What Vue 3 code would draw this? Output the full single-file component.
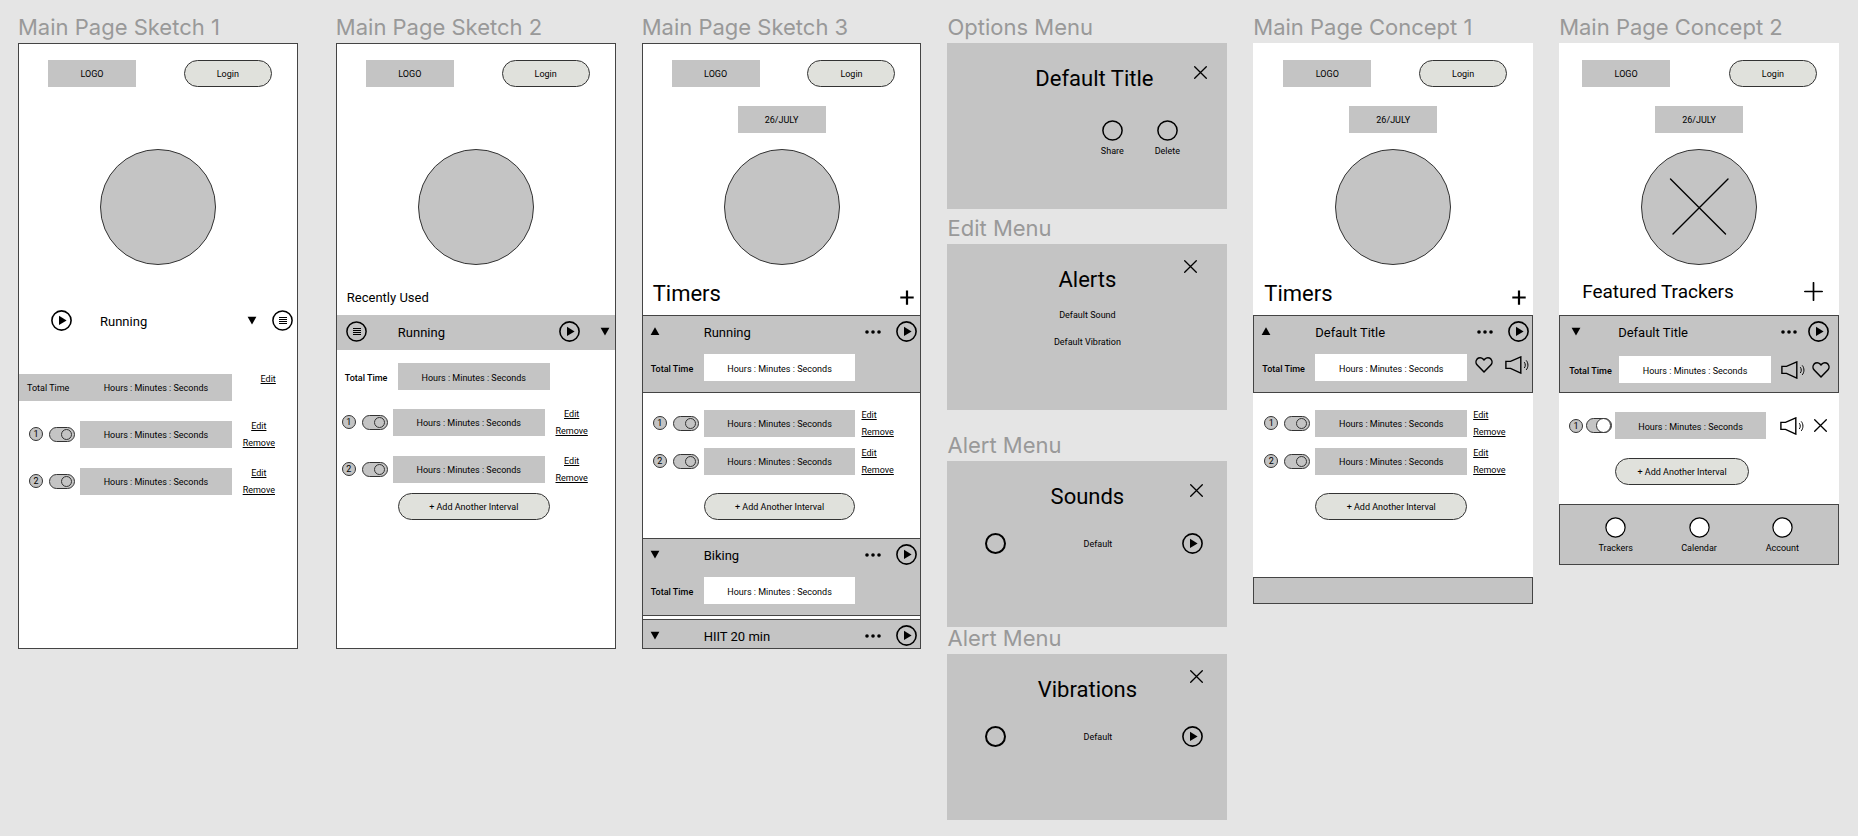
<script setup>
import { h } from 'vue'

const shapes = {
  play: {
    w: 21, h: 21,
    body: [
      ['circle', { cx: 10.5, cy: 10.5, r: 9.6, fill: 'none', stroke: '#000', 'stroke-width': 1.6 }],
      ['path', { d: 'M8 5.8L15.6 10.4L8 15z', fill: '#000' }],
    ],
  },
  menu: {
    w: 21, h: 21,
    body: [
      ['circle', { cx: 10.5, cy: 10.5, r: 9.6, fill: 'none', stroke: '#000', 'stroke-width': 1.5 }],
      ['path', { d: 'M7 7.5h8M7 9.5h8M7 11.5h8M7 13.5h8', stroke: '#000', 'stroke-width': 1 }],
    ],
  },
  ring: {
    w: 21, h: 21,
    body: [['circle', { cx: 10.5, cy: 10.5, r: 9.6, fill: 'none', stroke: '#000', 'stroke-width': 1.5 }]],
  },
  disc: {
    w: 21, h: 21,
    body: [['circle', { cx: 10.5, cy: 10.5, r: 9.6, fill: '#fff', stroke: '#000', 'stroke-width': 1.2 }]],
  },
  down: { w: 10, h: 21, body: [['path', { d: 'M.6 6.8h8.8L5 14.6z', fill: '#000' }]] },
  up: { w: 10, h: 21, body: [['path', { d: 'M.6 14h8.8L5 6.2z', fill: '#000' }]] },
  dots: {
    w: 16, h: 21,
    body: [
      ['circle', { cx: 2, cy: 11, r: 1.8 }],
      ['circle', { cx: 8, cy: 11, r: 1.8 }],
      ['circle', { cx: 14, cy: 11, r: 1.8 }],
    ],
  },
  plus: { w: 14, h: 15, body: [['path', { d: 'M.3 7.5h13.4M7 .5v14.2', stroke: '#000', 'stroke-width': 2.2 }]] },
  plusLarge: {
    w: 19, h: 19,
    body: [['path', { d: 'M.8 9.5h17.4M9.5.8v17.4', stroke: '#000', 'stroke-width': 1.7, 'stroke-linecap': 'round' }]],
  },
  close: {
    w: 13, h: 13,
    body: [['path', { d: 'M.7.7l11.6 11.6M12.3.7L.7 12.3', stroke: '#000', 'stroke-width': 1.3, 'stroke-linecap': 'round' }]],
  },
  cross: {
    w: 115, h: 115,
    body: [['path', { d: 'M28.5 29l55 55M86 29L31 84', stroke: '#000', 'stroke-width': 1.4, 'stroke-linecap': 'round' }]],
  },
  heart: {
    w: 18, h: 18,
    body: [['path', {
      d: 'M9 16L2.2 9C.6 7.3.6 4.6 2.2 2.9 3.9 1.2 6.5 1.2 8.1 2.9L9 3.9l.9-1c1.6-1.7 4.2-1.7 5.9 0 1.6 1.7 1.6 4.4 0 6.1z',
      fill: 'none', stroke: '#000', 'stroke-width': 1.5, 'stroke-linejoin': 'round',
    }]],
  },
  speaker: {
    w: 24, h: 18,
    body: [
      ['path', { d: 'M.9 5.4h4.6L15.8.9v16.2L5.5 12.4H.9z', fill: 'none', stroke: '#000', 'stroke-width': 1.4 }],
      ['path', { d: 'M19.3 6.2c1.3 1.7 1.3 4.2 0 5.8M21.2 4.4c2.3 2.6 2.3 6.9 0 9.5', fill: 'none', stroke: '#000', 'stroke-width': 1 }],
    ],
  },
}

const Icon = (props) => {
  const s = shapes[props.name]
  return h(
    'svg',
    { width: s.w, height: s.h, viewBox: `0 0 ${s.w} ${s.h}`, 'aria-hidden': 'true' },
    s.body.map(([tag, attrs]) => h(tag, attrs)),
  )
}
Icon.props = ['name']

const duration = 'Hours : Minutes : Seconds'
const intervals = [1, 2]
const tabs = ['Trackers', 'Calendar', 'Account']
const alertMenus = [
  { title: 'Sounds', top: 'low' },
  { title: 'Vibrations', top: 'high' },
]
</script>

<template>
  <main class="canvas">
    <section class="column spaced">
      <h2 class="name">Main Page Sketch 1</h2>
      <article class="board framed tall">
        <header class="top">
          <div class="tag">LOGO</div>
          <button class="pill login">Login</button>
        </header>
        <div class="dial"></div>
        <div class="bar plain">
          <button class="icon" aria-label="Play"><Icon name="play" /></button>
          <h3 class="title">Running</h3>
          <button class="icon" aria-label="Expand"><Icon name="down" /></button>
          <button class="icon" aria-label="Menu"><Icon name="menu" /></button>
        </div>
        <div class="rows loose">
          <div class="row total-band">
            <div class="band">
              <span class="label regular">Total Time</span>
              <div class="field">{{ duration }}</div>
            </div>
            <div class="links end"><a href="#">Edit</a></div>
          </div>
          <div v-for="n in intervals" :key="n" class="row wide-links">
            <span class="number">{{ n }}</span>
            <input class="toggle" type="checkbox" checked :aria-label="'Interval ' + n" />
            <div class="field">{{ duration }}</div>
            <div class="links middle"><a href="#">Edit</a><a href="#">Remove</a></div>
          </div>
        </div>
      </article>
    </section>

    <section class="column">
      <h2 class="name">Main Page Sketch 2</h2>
      <article class="board framed tall">
        <header class="top">
          <div class="tag">LOGO</div>
          <button class="pill login">Login</button>
        </header>
        <div class="dial"></div>
        <div class="heading"><h3 class="small-heading">Recently Used</h3></div>
        <div class="bar band-bar">
          <button class="icon" aria-label="Menu"><Icon name="menu" /></button>
          <h3 class="title">Running</h3>
          <button class="icon" aria-label="Play"><Icon name="play" /></button>
          <button class="icon" aria-label="Expand"><Icon name="down" /></button>
        </div>
        <div class="total open">
          <span class="label">Total Time</span>
          <div class="field">{{ duration }}</div>
        </div>
        <div class="rows medium">
          <div v-for="n in intervals" :key="n" class="row shifted">
            <span class="number">{{ n }}</span>
            <input class="toggle" type="checkbox" checked :aria-label="'Interval ' + n" />
            <div class="field">{{ duration }}</div>
            <div class="links middle"><a href="#">Edit</a><a href="#">Remove</a></div>
          </div>
        </div>
        <div class="add close-add"><button class="pill">+ Add Another Interval</button></div>
      </article>
    </section>

    <section class="column">
      <h2 class="name">Main Page Sketch 3</h2>
      <article class="board framed">
        <header class="top">
          <div class="tag">LOGO</div>
          <button class="pill login">Login</button>
        </header>
        <div class="tag date">26/JULY</div>
        <div class="dial dated"></div>
        <div class="heading">
          <h3 class="big">Timers</h3>
          <button class="icon" aria-label="Add timer"><Icon name="plus" /></button>
        </div>
        <div class="block">
          <div class="bar">
            <button class="icon" aria-label="Collapse"><Icon name="up" /></button>
            <h3 class="title">Running</h3>
            <button class="icon" aria-label="Options"><Icon name="dots" /></button>
            <button class="icon" aria-label="Play"><Icon name="play" /></button>
          </div>
          <div class="total">
            <span class="label">Total Time</span>
            <div class="field light">{{ duration }}</div>
          </div>
        </div>
        <div class="rows">
          <div v-for="n in intervals" :key="n" class="row">
            <span class="number">{{ n }}</span>
            <input class="toggle" type="checkbox" checked :aria-label="'Interval ' + n" />
            <div class="field">{{ duration }}</div>
            <div class="links"><a href="#">Edit</a><a href="#">Remove</a></div>
          </div>
        </div>
        <div class="add"><button class="pill">+ Add Another Interval</button></div>
        <div class="block follow">
          <div class="bar">
            <button class="icon" aria-label="Expand"><Icon name="down" /></button>
            <h3 class="title">Biking</h3>
            <button class="icon" aria-label="Options"><Icon name="dots" /></button>
            <button class="icon" aria-label="Play"><Icon name="play" /></button>
          </div>
          <div class="total">
            <span class="label">Total Time</span>
            <div class="field light">{{ duration }}</div>
          </div>
        </div>
        <div class="block cut">
          <div class="bar">
            <button class="icon" aria-label="Expand"><Icon name="down" /></button>
            <h3 class="title">HIIT 20 min</h3>
            <button class="icon" aria-label="Options"><Icon name="dots" /></button>
            <button class="icon" aria-label="Play"><Icon name="play" /></button>
          </div>
        </div>
      </article>
    </section>

    <section class="column">
      <h2 class="name">Options Menu</h2>
      <article class="card">
        <header class="card-top aside">
          <h3 class="big">Default Title</h3>
          <button class="icon dismiss low near" aria-label="Close"><Icon name="close" /></button>
        </header>
        <div class="actions">
          <button class="action"><Icon name="ring" />Share</button>
          <button class="action"><Icon name="ring" />Delete</button>
        </div>
      </article>

      <h2 class="name second">Edit Menu</h2>
      <article class="card">
        <header class="card-top">
          <h3 class="big">Alerts</h3>
          <button class="icon dismiss far" aria-label="Close"><Icon name="close" /></button>
        </header>
        <div class="choices">
          <button class="choice">Default Sound</button>
          <button class="choice">Default Vibration</button>
        </div>
      </article>

      <template v-for="(m, i) in alertMenus" :key="m.title">
        <h2 class="name" :class="{ third: i === 0 }">Alert Menu</h2>
        <article class="card">
          <header class="card-top">
            <h3 class="big">{{ m.title }}</h3>
            <button class="icon dismiss" :class="m.top" aria-label="Close"><Icon name="close" /></button>
          </header>
          <div class="pick">
            <input :id="'pick-' + i" class="radio" type="radio" :name="'pick-' + i" />
            <label :for="'pick-' + i">Default</label>
            <button class="icon" aria-label="Play"><Icon name="play" /></button>
          </div>
        </article>
      </template>
    </section>

    <section class="column">
      <h2 class="name">Main Page Concept 1</h2>
      <article class="board">
        <header class="top">
          <div class="tag">LOGO</div>
          <button class="pill login">Login</button>
        </header>
        <div class="tag date">26/JULY</div>
        <div class="dial dated"></div>
        <div class="heading">
          <h3 class="big">Timers</h3>
          <button class="icon" aria-label="Add timer"><Icon name="plus" /></button>
        </div>
        <div class="block boxed">
          <div class="bar">
            <button class="icon" aria-label="Collapse"><Icon name="up" /></button>
            <h3 class="title">Default Title</h3>
            <button class="icon" aria-label="Options"><Icon name="dots" /></button>
            <button class="icon" aria-label="Play"><Icon name="play" /></button>
          </div>
          <div class="total with-tools">
            <span class="label">Total Time</span>
            <div class="field light">{{ duration }}</div>
            <div class="tools">
              <button class="icon" aria-label="Favourite"><Icon name="heart" /></button>
              <button class="icon" aria-label="Sound"><Icon name="speaker" /></button>
            </div>
          </div>
        </div>
        <div class="rows">
          <div v-for="n in intervals" :key="n" class="row">
            <span class="number">{{ n }}</span>
            <input class="toggle" type="checkbox" checked :aria-label="'Interval ' + n" />
            <div class="field">{{ duration }}</div>
            <div class="links"><a href="#">Edit</a><a href="#">Remove</a></div>
          </div>
        </div>
        <div class="add"><button class="pill">+ Add Another Interval</button></div>
        <footer class="strip"></footer>
      </article>
    </section>

    <section class="column">
      <h2 class="name">Main Page Concept 2</h2>
      <article class="board featured">
        <header class="top">
          <div class="tag">LOGO</div>
          <button class="pill login">Login</button>
        </header>
        <div class="tag date">26/JULY</div>
        <div class="dial dated"><Icon name="cross" /></div>
        <div class="heading">
          <h3 class="mid">Featured Trackers</h3>
          <button class="icon" aria-label="Add tracker"><Icon name="plusLarge" /></button>
        </div>
        <div class="block boxed">
          <div class="bar">
            <button class="icon" aria-label="Expand"><Icon name="down" /></button>
            <h3 class="title">Default Title</h3>
            <button class="icon" aria-label="Options"><Icon name="dots" /></button>
            <button class="icon" aria-label="Play"><Icon name="play" /></button>
          </div>
          <div class="total">
            <span class="label">Total Time</span>
            <div class="field light">{{ duration }}</div>
            <button class="icon sound" aria-label="Sound"><Icon name="speaker" /></button>
            <button class="icon" aria-label="Favourite"><Icon name="heart" /></button>
          </div>
        </div>
        <div class="rows">
          <div class="row">
            <span class="number">1</span>
            <input class="toggle" type="checkbox" checked aria-label="Interval 1" />
            <div class="field">{{ duration }}</div>
            <button class="icon sound" aria-label="Sound"><Icon name="speaker" /></button>
            <button class="icon" aria-label="Remove"><Icon name="close" /></button>
          </div>
        </div>
        <div class="add"><button class="pill">+ Add Another Interval</button></div>
        <nav class="tabs">
          <button v-for="t in tabs" :key="t" class="action"><Icon name="disc" />{{ t }}</button>
        </nav>
      </article>
    </section>
  </main>
</template>

<style>
body {
  margin: 0;
  background: #e5e5e5;
}
</style>

<style scoped>
* {
  box-sizing: border-box;
}
.canvas {
  display: flex;
  align-items: flex-start;
  gap: 26px;
  padding: 16px 19px 16px 18px;
  font-family: Roboto, "Liberation Sans", sans-serif;
  font-size: 9px;
  line-height: 12px;
  color: #000;
}
.column {
  flex: 1 1 0;
  min-width: 0;
}
.spaced {
  margin-right: 12px;
}
h2, h3 {
  margin: 0;
  font-weight: 400;
  white-space: nowrap;
}
button {
  margin: 0;
  padding: 0;
  border: 0;
  background: none;
  font: inherit;
  color: inherit;
}
svg {
  display: block;
}
.icon {
  flex: none;
}
.name {
  margin-bottom: 5px;
  font-family: Inter, sans-serif;
  font-size: 22px;
  line-height: 22px;
  color: #999;
}
.second {
  margin-top: 8px;
}
.third {
  margin-top: 24px;
}

/* boards */
.board {
  background: #fff;
}
.framed {
  outline: 1px solid #444;
  outline-offset: -1px;
}
.tall {
  min-height: 606px;
}
.top {
  display: flex;
  justify-content: space-between;
  padding: 17px 26px 0 30px;
}
.tag {
  display: flex;
  align-items: center;
  justify-content: center;
  width: 88px;
  height: 27px;
  background: #c4c4c4;
}
.date {
  margin: 19px auto 0;
}
.pill {
  height: 27px;
  border: 1px solid #333;
  border-radius: 14px;
  background: #e0e1dc;
  white-space: nowrap;
}
.login {
  width: 88px;
}
.dial {
  width: 116px;
  height: 116px;
  margin: 62px auto 0;
  border: 1px solid #333;
  border-radius: 50%;
  background: #c4c4c4;
}
.dated {
  margin-top: 16px;
}
.heading {
  display: flex;
  align-items: flex-end;
  justify-content: space-between;
  height: 50px;
  padding: 0 7px 10px 11px;
}
.big {
  font-size: 22px;
  line-height: 22px;
}
.mid {
  font-size: 19px;
  line-height: 18px;
}
.small-heading {
  font-size: 13px;
  line-height: 14px;
}

/* timer header bars */
.bar {
  display: flex;
  align-items: flex-start;
  padding: 0 4px 0 8px;
}
.title {
  flex: 1;
  margin-left: 44px;
  font-size: 13px;
  line-height: 24px;
}
.bar .icon:last-child {
  margin-left: 15px;
}
.plain {
  padding: 0 5px 0 33px;
  margin-top: 45px;
}
.plain .title {
  margin-left: 28px;
}
.band-bar {
  padding: 6px 6px 5px 10px;
  background: #c4c4c4;
}
.band-bar .title {
  margin-left: 31px;
}
.band-bar .icon:last-child {
  margin-left: 20px;
}
.block {
  padding: 5px 0 11px;
  border: solid #444;
  border-width: 1px 0;
  background: #c4c4c4;
}
.boxed {
  outline: 1px solid #444;
  outline-offset: -1px;
  border-color: transparent;
}
.follow {
  margin-top: 18px;
}
.cut {
  margin-top: 3px;
  padding-bottom: 0;
  border-bottom: 0;
}

/* total time */
.total {
  display: flex;
  align-items: center;
  margin-top: 9px;
  padding: 0 66px 0 9px;
}
.label {
  flex: none;
  width: 53px;
  padding-top: 2px;
  font-weight: 500;
  white-space: nowrap;
}
.regular {
  font-weight: 400;
}
.field {
  flex: 1;
  display: flex;
  align-items: center;
  justify-content: center;
  height: 27px;
  padding-top: 2px;
  background: #c4c4c4;
  white-space: nowrap;
}
.light {
  background: #fff;
}
.open {
  margin-top: 13px;
}
.with-tools {
  padding-right: 4px;
}
.tools {
  display: flex;
  align-self: flex-start;
  gap: 12px;
  padding-top: 2px;
  margin-left: 8px;
}

/* interval rows */
.rows {
  display: grid;
  gap: 4px;
  padding-top: 13px;
}
.loose {
  gap: 13px;
  padding-top: 36px;
}
.medium {
  gap: 13px;
  padding-top: 15px;
}
.row {
  display: flex;
  align-items: center;
  padding: 0 26px 0 11px;
}
.number {
  flex: none;
  width: 14px;
  height: 14px;
  border: 1px solid #333;
  border-radius: 50%;
  background: #c4c4c4;
  text-align: center;
}
.toggle {
  appearance: none;
  flex: none;
  display: flex;
  align-items: center;
  justify-content: flex-end;
  width: 26px;
  height: 15px;
  margin: 0 5px 0 6px;
  padding-right: 2px;
  border: 1px solid #333;
  border-radius: 8px;
  background: #c4c4c4;
}
.toggle::before {
  content: "";
  width: 9px;
  height: 9px;
  border: 1px solid #333;
  border-radius: 50%;
}
.links {
  display: flex;
  flex-direction: column;
  width: 34px;
  height: 34px;
  padding-top: 1px;
  margin-left: 6px;
  line-height: 17px;
}
.links a {
  color: inherit;
}
.middle {
  align-items: center;
}
.wide-links {
  padding-right: 22px;
}
.wide-links .links,
.shifted .links,
.total-band .links {
  margin-left: 10px;
}
.shifted {
  padding: 0 27px 0 6px;
}
.total-band {
  padding: 0 22px 0 0;
}
.band {
  flex: 1;
  display: flex;
  align-items: center;
  padding-left: 9px;
  background: #c4c4c4;
}
.end {
  align-items: flex-end;
}
.add {
  display: flex;
  padding: 15px 66px 0 62px;
}
.add .pill {
  flex: 1;
}
.close-add {
  padding-top: 7px;
}
.strip {
  height: 27px;
  margin-top: 57px;
  border: 1px solid #444;
  background: #c4c4c4;
}

/* featured trackers board */
.featured .top {
  padding: 17px 22px 0 23px;
}
.featured .heading {
  padding: 0 16px 14px 23px;
}
.featured .bar {
  padding: 0 10px 0 12px;
}
.featured .title {
  margin-left: 37px;
}
.featured .bar .icon:last-child {
  margin-left: 11px;
}
.featured .block {
  padding-bottom: 9px;
}
.featured .total {
  margin-top: 11px;
  padding: 0 9px 0 10px;
}
.featured .label {
  width: 50px;
}
.featured .sound {
  margin: 0 7px 0 10px;
}
.featured .rows {
  padding-top: 19px;
}
.featured .row {
  padding: 0 12px 0 10px;
}
.featured .row .sound {
  margin: 0 10px 0 14px;
}
.featured .toggle {
  margin: 0 3px;
  padding-right: 0;
}
.featured .toggle::before {
  width: 13px;
  height: 13px;
  background: #fff;
}
.featured .add {
  padding: 19px 90px 0 56px;
}
.tabs {
  display: grid;
  grid-template-columns: repeat(3, 1fr);
  margin-top: 19px;
  padding: 12px 14px 10px;
  border: 1px solid #444;
  background: #c4c4c4;
}
.action {
  display: flex;
  flex-direction: column;
  align-items: center;
  gap: 4px;
}

/* menu cards */
.card {
  min-height: 166px;
  background: #c4c4c4;
}
.card-top {
  display: grid;
  grid-template-columns: 1fr auto 1fr;
  align-items: start;
  padding-top: 16px;
}
.card-top .big {
  grid-column: 2;
  margin-top: 9px;
}
.aside {
  padding-left: 14px;
}
.dismiss {
  justify-self: end;
  margin-right: 24px;
}
.low {
  margin-top: 7px;
}
.near {
  margin-right: 20px;
}
.far {
  margin-right: 30px;
}
.actions {
  display: flex;
  justify-content: flex-end;
  gap: 15px;
  margin-top: 30px;
  padding-right: 40px;
}
.actions .action {
  width: 40px;
}
.choices {
  display: flex;
  flex-direction: column;
  align-items: center;
  gap: 15px;
  margin-top: 18px;
}
.pick {
  display: flex;
  align-items: center;
  margin-top: 25px;
  padding: 0 24px 0 38px;
}
.pick label {
  flex: 1;
  padding-left: 7px;
  text-align: center;
}
.radio {
  appearance: none;
  width: 21px;
  height: 21px;
  margin: 0;
  border: 2px solid #000;
  border-radius: 50%;
}
</style>
